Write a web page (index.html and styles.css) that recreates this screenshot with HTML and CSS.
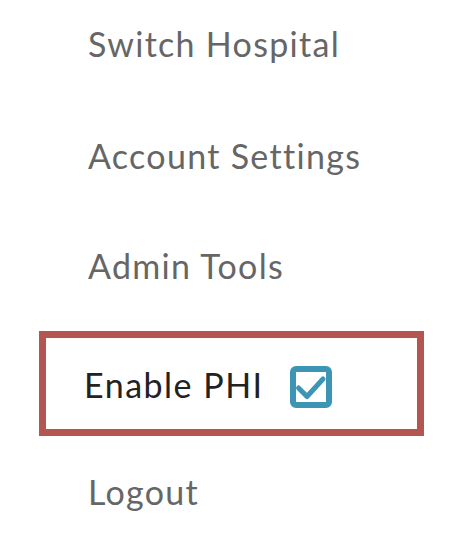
FILE: index.html
```html
<!DOCTYPE html>
<html>
<head>
<meta charset="utf-8">
<link rel="stylesheet" href="styles.css">
</head>
<body>
<div class="menu">
  <div class="item item-first">Switch Hospital</div>
  <div class="item item-2">Account Settings</div>
  <div class="item item-3">Admin Tools</div>
  <div class="phi-box">
    <span class="phi-label">Enable PHI</span>
    <svg class="checkbox" width="42" height="42" viewBox="0 0 42 42">
      <rect x="3" y="3" width="36" height="36" rx="3" fill="none" stroke="#3d95b6" stroke-width="6"/>
      <path d="M8.5 22 L17 30.5 L33 13" fill="none" stroke="#3d95b6" stroke-width="5" stroke-linecap="round" stroke-linejoin="round"/>
    </svg>
  </div>
  <div class="item item-last">Logout</div>
</div>
</body>
</html>
```
FILE: styles.css
```css
html, body {
  margin: 0;
  padding: 0;
  background: #ffffff;
}
.menu {
  display: flex;
  flex-direction: column;
  padding: 24px 0 0 39px;
}
.item {
  font-family: Lato, "Open Sans", sans-serif;
  font-size: 34px;
  line-height: 40px;
  letter-spacing: 1.3px;
  color: #666666;
  padding-left: 49px;
}
.item-2 { margin-top: 72px; }
.item-3 { margin-top: 70px; }
.phi-box {
  margin-top: 45px;
  width: 385px;
  box-sizing: border-box;
  border: 7px solid #b5554f;
  padding: 27px 0 21px 38px;
  display: flex;
  align-items: flex-start;
  gap: 26px;
}
.phi-label {
  font-family: Lato, "Open Sans", sans-serif;
  font-size: 34px;
  line-height: 40px;
  letter-spacing: 1.5px;
  color: #222222;
}
.checkbox {
  margin-top: 1px;
  display: block;
}
.item-last { margin-top: 36px; }
```
